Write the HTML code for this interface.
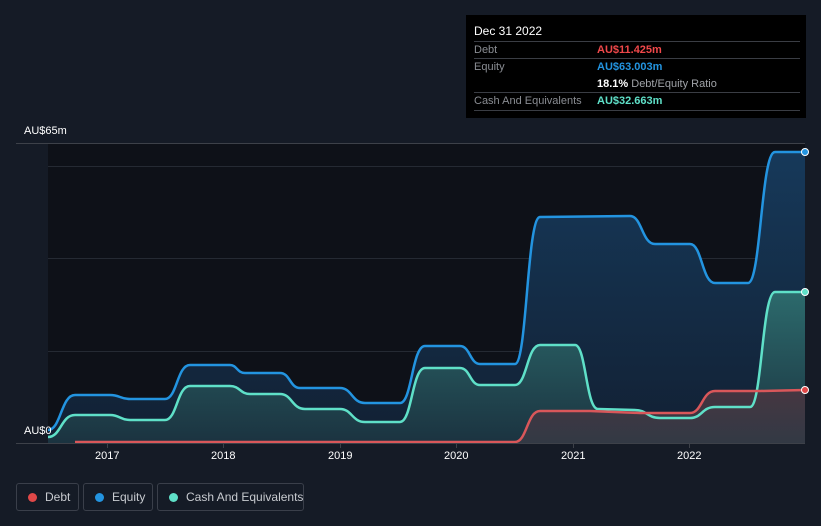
<!DOCTYPE html>
<html><head><meta charset="utf-8"><style>
*{margin:0;padding:0;box-sizing:border-box}
html,body{width:821px;height:526px}
body{background:#151b26;font-family:"Liberation Sans",sans-serif;position:relative;overflow:hidden;color:#fff}
.tt{position:absolute;left:466px;top:15px;width:340px;height:103px;background:#000;font-size:11px}
.row{position:absolute;left:8px;right:6px;height:17px;border-bottom:1px solid #3a3d44;line-height:16px;white-space:nowrap}
.row .l{position:absolute;left:0;color:#8a8d93}
.row .v{position:absolute;left:123px;font-weight:bold}
.lg{position:absolute;top:483px;height:28px;border:1px solid #3a3f4a;border-radius:3px;font-size:12px;color:#c8cbd0;line-height:26px;padding-left:28px;white-space:nowrap;overflow:hidden}
.lg i{position:absolute;left:11px;top:9px;width:9px;height:9px;border-radius:50%}
.ax{position:absolute;font-size:11px;color:#fff}
</style></head><body>
<svg width="821" height="526" style="position:absolute;left:0;top:0">
<defs>
<linearGradient id="ge" x1="0" y1="0" x2="0" y2="1"><stop offset="0" stop-color="#16395a"/><stop offset="1" stop-color="#122033"/></linearGradient>
<linearGradient id="gc" x1="0" y1="0" x2="0" y2="1"><stop offset="0" stop-color="#2c6a6c"/><stop offset="1" stop-color="#1b3340"/></linearGradient>
<linearGradient id="gd" x1="0" y1="0" x2="0" y2="1"><stop offset="0" stop-color="#4a3540"/><stop offset="1" stop-color="#353a45"/></linearGradient>
</defs>
<rect x="48" y="144" width="757" height="299" fill="#0e1118"/>
<line x1="16" y1="143.5" x2="805" y2="143.5" stroke="#3d4149"/>
<g stroke="#252a33"><line x1="48" y1="166.5" x2="805" y2="166.5"/><line x1="48" y1="258.5" x2="805" y2="258.5"/><line x1="48" y1="351.5" x2="805" y2="351.5"/></g>
<path d="M48,430 C61,430 61,395 75,395 L110,395 C120,395 120,399 130,399 L165,399 C177,399 177,365 190,365 L230,365 C237,365 237,373 245,373 L280,373 C290,373 290,388 300,388 L340,388 C352,388 352,403 365,403 L400,403 C412,403 412,346 425,346 L460,346 C470,346 470,364 480,364 L515,364 C527,364 527,217 540,217 L630,216 C642,216 642,244 655,244 L690,244 C702,244 702,283 715,283 L748,283 C761,283 761,152 775,152 L805,152 L805,443 L48,443Z" fill="url(#ge)"/>
<path d="M48,437 C61,437 61,415 75,415 L110,415 C120,415 120,420 130,420 L165,420 C177,420 177,386 190,386 L230,386 C240,386 240,394 250,394 L280,394 C292,394 292,409 305,409 L340,409 C352,409 352,422 365,422 L400,422 C412,422 412,368 425,368 L460,368 C470,368 470,385 480,385 L515,385 C527,385 527,345 540,345 L575,345 C586,345 586,409 598,409 L635,410 C647,410 647,418 660,418 L690,418 C702,418 702,407 715,407 L750,407 C762,407 762,292 775,292 L805,292 L805,443 L48,443Z" fill="url(#gc)"/>
<path d="M75,442 L515,442 C527,442 527,411 540,411 L590,411 L640,413 L690,413 C702,413 702,391 715,391 L760,391 L805,390 L805,443 L75,443Z" fill="url(#gd)" opacity="0.9"/>
<g fill="none" stroke-width="2.5">
<path d="M48,430 C61,430 61,395 75,395 L110,395 C120,395 120,399 130,399 L165,399 C177,399 177,365 190,365 L230,365 C237,365 237,373 245,373 L280,373 C290,373 290,388 300,388 L340,388 C352,388 352,403 365,403 L400,403 C412,403 412,346 425,346 L460,346 C470,346 470,364 480,364 L515,364 C527,364 527,217 540,217 L630,216 C642,216 642,244 655,244 L690,244 C702,244 702,283 715,283 L748,283 C761,283 761,152 775,152 L805,152" stroke="#2394e0"/>
<path d="M48,437 C61,437 61,415 75,415 L110,415 C120,415 120,420 130,420 L165,420 C177,420 177,386 190,386 L230,386 C240,386 240,394 250,394 L280,394 C292,394 292,409 305,409 L340,409 C352,409 352,422 365,422 L400,422 C412,422 412,368 425,368 L460,368 C470,368 470,385 480,385 L515,385 C527,385 527,345 540,345 L575,345 C586,345 586,409 598,409 L635,410 C647,410 647,418 660,418 L690,418 C702,418 702,407 715,407 L750,407 C762,407 762,292 775,292 L805,292" stroke="#5fe0c8"/>
<path d="M75,442 L515,442 C527,442 527,411 540,411 L590,411 L640,413 L690,413 C702,413 702,391 715,391 L760,391 L805,390" stroke="#d9575a"/>
</g>
<line x1="16" y1="443.5" x2="805" y2="443.5" stroke="#3d4149"/>
<g stroke="#3d4149"><line x1="107.5" y1="443" x2="107.5" y2="448"/><line x1="223.5" y1="443" x2="223.5" y2="448"/><line x1="340.5" y1="443" x2="340.5" y2="448"/><line x1="456.5" y1="443" x2="456.5" y2="448"/><line x1="573.5" y1="443" x2="573.5" y2="448"/><line x1="689.5" y1="443" x2="689.5" y2="448"/></g>
<circle cx="805" cy="152" r="3.5" fill="#2394e0" stroke="#fff" stroke-width="1"/>
<circle cx="805" cy="292" r="3.5" fill="#5fe0c8" stroke="#fff" stroke-width="1"/>
<circle cx="805" cy="390" r="3.5" fill="#e04848" stroke="#fff" stroke-width="1"/>
</svg>
<div class="ax" style="left:24px;top:125px">AU$65m</div>
<div class="ax" style="left:24px;top:425px">AU$0</div>
<div class="ax" style="left:95px;top:450px">2017</div>
<div class="ax" style="left:211px;top:450px">2018</div>
<div class="ax" style="left:328px;top:450px">2019</div>
<div class="ax" style="left:444px;top:450px">2020</div>
<div class="ax" style="left:561px;top:450px">2021</div>
<div class="ax" style="left:677px;top:450px">2022</div>
<div class="tt">
<div style="position:absolute;left:8px;top:9px;font-size:12px">Dec 31 2022</div>
<div class="row" style="top:26px;border-top:1px solid #3a3d44;height:18px"><span class="l">Debt</span><span class="v" style="color:#f0484a">AU$11.425m</span></div>
<div class="row" style="top:44px;border:none"><span class="l">Equity</span><span class="v" style="color:#2394e0">AU$63.003m</span></div>
<div class="row" style="top:61px"><span class="v" style="color:#fff">18.1% <span style="font-weight:normal;color:#a0a3a8">Debt/Equity Ratio</span></span></div>
<div class="row" style="top:78px;height:18px"><span class="l">Cash And Equivalents</span><span class="v" style="color:#5fe0c8">AU$32.663m</span></div>
</div>
<div class="lg" style="left:16px;width:63px"><i style="background:#e04848"></i>Debt</div>
<div class="lg" style="left:83px;width:70px"><i style="background:#2394e0"></i>Equity</div>
<div class="lg" style="left:157px;width:147px"><i style="background:#5fe0c8"></i>Cash And Equivalents</div>
</body></html>
